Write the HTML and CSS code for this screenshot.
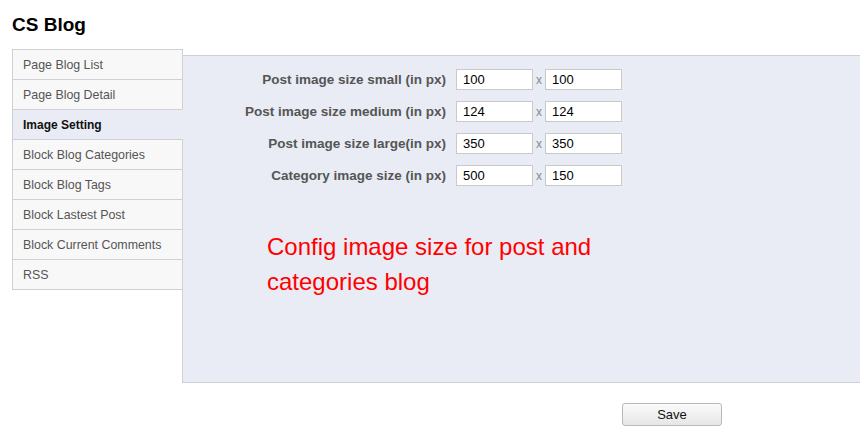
FILE: index.html
```html
<!DOCTYPE html>
<html>
<head>
<meta charset="utf-8">
<link rel="stylesheet" href="styles.css">
</head>
<body>
<h1 class="title">CS Blog</h1>
<div class="layout">
  <ul class="tabs">
    <li class="tab">Page Blog List</li>
    <li class="tab">Page Blog Detail</li>
    <li class="tab active">Image Setting</li>
    <li class="tab">Block Blog Categories</li>
    <li class="tab">Block Blog Tags</li>
    <li class="tab">Block Lastest Post</li>
    <li class="tab">Block Current Comments</li>
    <li class="tab">RSS</li>
  </ul>
  <div class="panel">
    <div class="form">
      <div class="row">
        <label class="label">Post image size small (in px)</label>
        <input class="field" type="text" value="100">
        <span class="times">x</span>
        <input class="field" type="text" value="100">
      </div>
      <div class="row">
        <label class="label">Post image size medium (in px)</label>
        <input class="field" type="text" value="124">
        <span class="times">x</span>
        <input class="field" type="text" value="124">
      </div>
      <div class="row">
        <label class="label">Post image size large(in px)</label>
        <input class="field" type="text" value="350">
        <span class="times">x</span>
        <input class="field" type="text" value="350">
      </div>
      <div class="row">
        <label class="label">Category image size (in px)</label>
        <input class="field" type="text" value="500">
        <span class="times">x</span>
        <input class="field" type="text" value="150">
      </div>
    </div>
    <p class="note">Config image size for post and<br>categories blog</p>
  </div>
</div>
<div class="actions">
  <button class="save" type="button">Save</button>
</div>
</body>
</html>
```
FILE: styles.css
```css
html, body {
  margin: 0;
  padding: 0;
  background: #ffffff;
  font-family: "Liberation Sans", Arial, sans-serif;
  overflow: hidden;
}
body {
  padding: 0 0 0 12px;
}
.title {
  margin: 0;
  padding-top: 14px;
  height: 49px;
  box-sizing: border-box;
  font-size: 19px;
  line-height: 22px;
  font-weight: bold;
  color: #000;
}
.layout {
  display: flex;
  align-items: flex-start;
}
.tabs {
  list-style: none;
  margin: 0 -1px 0 0;
  padding: 0;
  width: 171px;
  flex: none;
  position: relative;
  z-index: 1;
}
.tab {
  box-sizing: border-box;
  height: 31px;
  margin-top: -1px;
  padding: 1px 0 0 10px;
  line-height: 28px;
  font-size: 12.4px;
  color: #555;
  background: #f8f8f9;
  border: 1px solid #cfd0d6;
}
.tab:first-child {
  margin-top: 0;
}
.active {
  background: #e9ecf4;
  border-right-color: #e9ecf4;
  color: #111;
  font-weight: bold;
  font-size: 12px;
}
.panel {
  flex: 1;
  margin-top: 6px;
  margin-right: -20px;
  height: 328px;
  box-sizing: border-box;
  background: #e9ecf4;
  border: 1px solid #cfd0d6;
}
.form {
  padding-top: 13px;
  display: flex;
  flex-direction: column;
  gap: 11px;
}
.row {
  display: flex;
  align-items: center;
  height: 21px;
}
.label {
  width: 263px;
  text-align: right;
  font-size: 13.5px;
  font-weight: bold;
  color: #555;
  margin-right: 10px;
}
.field {
  box-sizing: border-box;
  width: 77px;
  height: 21px;
  margin: 0;
  padding: 0 6px;
  border: 1px solid #c9c9c9;
  background: #fff;
  font-family: "Liberation Sans", Arial, sans-serif;
  font-size: 13px;
  color: #000;
  outline: none;
}
.times {
  width: 12px;
  text-align: center;
  font-size: 12px;
  color: #888;
}
.note {
  margin: 43px 0 0 84px;
  font-size: 24px;
  line-height: 35px;
  color: #ff0000;
}
.actions {
  padding: 20px 0 0 610px;
}
.save {
  box-sizing: border-box;
  width: 100px;
  height: 23px;
  padding: 0;
  border: 1px solid #b9b9b9;
  border-radius: 3px;
  background: linear-gradient(#fbfbfb, #e6e6e6);
  font-family: "Liberation Sans", Arial, sans-serif;
  font-size: 13px;
  color: #111;
}
```
